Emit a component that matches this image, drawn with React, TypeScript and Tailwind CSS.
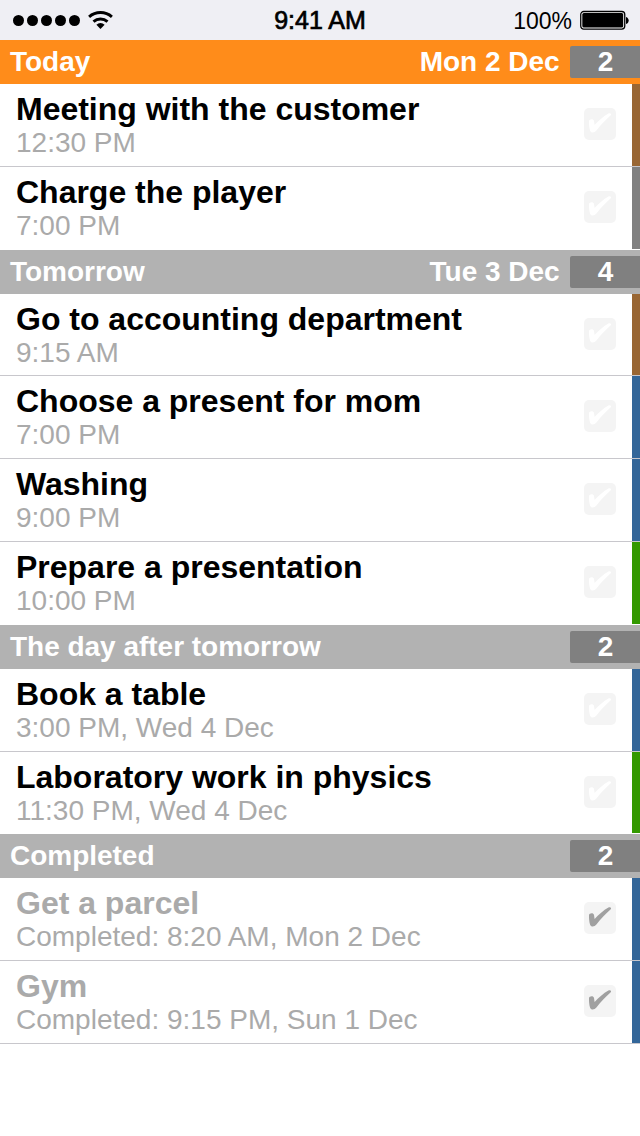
import clsx from "clsx";

interface Task {
  title: string;
  time: string;
  color: string;
  // row height including its bottom divider
  height?: string;
  done?: boolean;
}

interface Section {
  title: string;
  date?: string;
  today?: boolean;
  tasks: Task[];
}

const BROWN = "bg-[#996633]";
const GRAY = "bg-[#808080]";
const BLUE = "bg-[#336699]";
const GREEN = "bg-[#339900]";

const sections: Section[] = [
  {
    title: "Today",
    date: "Mon 2 Dec",
    today: true,
    tasks: [
      { title: "Meeting with the customer", time: "12:30 PM", color: BROWN },
      { title: "Charge the player", time: "7:00 PM", color: GRAY },
    ],
  },
  {
    title: "Tomorrow",
    date: "Tue 3 Dec",
    tasks: [
      {
        title: "Go to accounting department",
        time: "9:15 AM",
        color: BROWN,
        height: "h-[82px]",
      },
      { title: "Choose a present for mom", time: "7:00 PM", color: BLUE },
      { title: "Washing", time: "9:00 PM", color: BLUE },
      { title: "Prepare a presentation", time: "10:00 PM", color: GREEN },
    ],
  },
  {
    title: "The day after tomorrow",
    tasks: [
      { title: "Book a table", time: "3:00 PM, Wed 4 Dec", color: BLUE },
      {
        title: "Laboratory work in physics",
        time: "11:30 PM, Wed 4 Dec",
        color: GREEN,
        height: "h-[82px]",
      },
    ],
  },
  {
    title: "Completed",
    tasks: [
      {
        title: "Get a parcel",
        time: "Completed: 8:20 AM, Mon 2 Dec",
        color: BLUE,
        done: true,
      },
      {
        title: "Gym",
        time: "Completed: 9:15 PM, Sun 1 Dec",
        color: BLUE,
        done: true,
      },
    ],
  },
];

function StatusBar() {
  return (
    <div className="grid h-10 grid-cols-3 items-center bg-[#efeff4] text-black">
      <div className="flex items-center gap-2 pl-[13px]">
        <div className="flex gap-[3px]">
          {[0, 1, 2, 3, 4].map((i) => (
            <span key={i} className="size-[11px] rounded-full bg-black" />
          ))}
        </div>
        <svg width="25" height="18" viewBox="0 0 25 18">
          <g fill="none" stroke="#000" strokeWidth="3">
            <path d="M1.1 5.800a17.600 17.600 0 0 1 22.800 0" />
            <path d="M5.500 10.600a10.800 10.800 0 0 1 14 0" />
          </g>
          <path d="M12.500 17.900l-4.100-4.200a6 6 0 0 1 8.200 0z" />
        </svg>
      </div>
      <span className="text-center text-[25px] leading-10 [-webkit-text-stroke:0.7px_#000]">
        9:41 AM
      </span>
      <div className="flex items-center justify-end gap-2 pr-[11px]">
        <span className="pt-0.5 text-[23px] leading-[38px]">100%</span>
        <svg width="49" height="20" viewBox="0 0 49 20">
          <rect x="0.750" y="1.500" width="44" height="17.600" rx="3" fill="#fff" stroke="#000" strokeWidth="1.3" />
          <rect x="2.300" y="3.050" width="40.900" height="14.500" rx="1.500" />
          <path d="M46 7c3.600 1 3.600 6 0 7z" />
        </svg>
      </div>
    </div>
  );
}

function SectionHeader({ section }: { section: Section }) {
  return (
    <div
      className={clsx(
        "flex h-11 items-center pl-[10px] text-[28px] leading-[44px] font-bold text-white",
        section.today ? "bg-[#ff8c1a]" : "bg-[#b2b2b2]",
      )}
    >
      <h2 className="flex-1 tracking-[-0.02px]">{section.title}</h2>
      {section.date ? (
        <span className="pr-[10.5px] tracking-[-0.03px]">{section.date}</span>
      ) : null}
      <span className="h-8 w-[70px] rounded-l-[2px] bg-[#808080] pl-px text-center leading-8">
        {section.tasks.length}
      </span>
    </div>
  );
}

function Checkbox({ done }: { done?: boolean }) {
  return (
    <span className="mt-6 mr-4 size-8 rounded-[5px] bg-[#f4f4f4]">
      <svg width="32" height="32" viewBox="0 0 32 32">
        <path
          d="M5 13.200c.1-2.300 4.600-2.700 5-.3l.6 4.100C14.500 12.800 19.500 8.300 24.400 5.600c2-1.100 3.600.5 2.100 2-5.200 4.700-9.400 9.200-14.100 15-1.800 2.200-5.400 2.800-6.300.1-.9-2.900-1.200-6.400-1.100-9.500z"
          fill={done ? "#a0a0a0" : "#fff"}
        />
      </svg>
    </span>
  );
}

function TaskRow({ task, last }: { task: Task; last: boolean }) {
  return (
    <li
      className={clsx(
        "flex border-b",
        task.height ?? "h-[83px]",
        last && !task.done ? "border-white" : "border-[#c8c7cc]",
      )}
    >
      <div className="flex-1 pt-[7px] pl-4">
        <p
          className={clsx(
            "text-[32px] leading-[36px] font-bold tracking-[-0.01px]",
            task.done ? "text-[#aaaaaa]" : "text-black",
          )}
        >
          {task.title}
        </p>
        <p className="text-[28px] leading-[31px] text-[#aaaaaa]">{task.time}</p>
      </div>
      <Checkbox done={task.done} />
      <span className={clsx("w-2", task.color)} />
    </li>
  );
}

export default function App() {
  return (
    <div className="min-h-[1136px] w-[640px] bg-white font-['Liberation_Sans',Arial,sans-serif]">
      <StatusBar />
      {sections.map((section) => (
        <section key={section.title}>
          <SectionHeader section={section} />
          <ul>
            {section.tasks.map((task, i) => (
              <TaskRow
                key={task.title}
                task={task}
                last={i === section.tasks.length - 1}
              />
            ))}
          </ul>
        </section>
      ))}
    </div>
  );
}
